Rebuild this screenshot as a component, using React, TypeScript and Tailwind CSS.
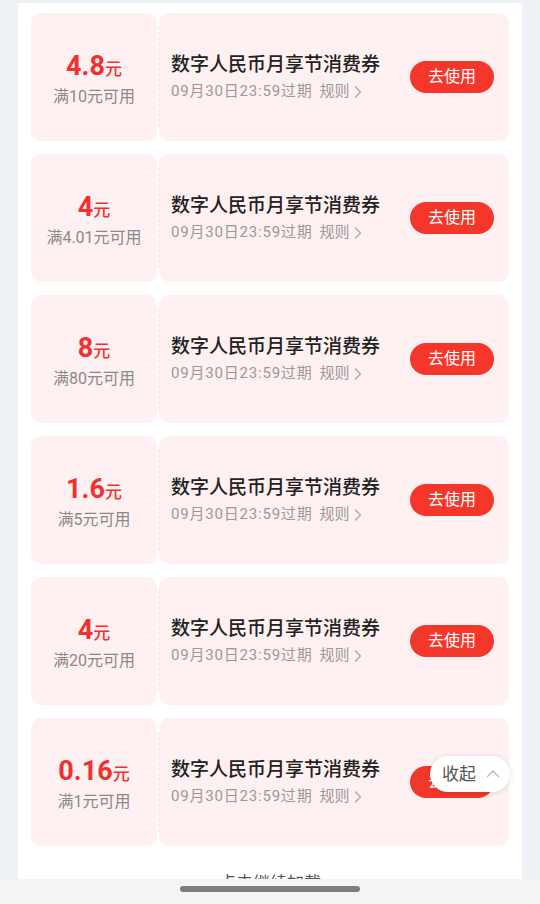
import React from "react";

type Coupon = {
  amount: string;
  limit: string;
};

const coupons: Coupon[] = [
  { amount: "4.8", limit: "满10元可用" },
  { amount: "4", limit: "满4.01元可用" },
  { amount: "8", limit: "满80元可用" },
  { amount: "1.6", limit: "满5元可用" },
  { amount: "4", limit: "满20元可用" },
  { amount: "0.16", limit: "满1元可用" },
];

const font = "font-['Roboto','Noto_Sans_CJK_SC',sans-serif]";

function CouponCard({ coupon }: { coupon: Coupon }) {
  return (
    <div className="flex h-[128px] mb-[13px]">
      <div className="w-[126px] rounded-[10px] bg-[#fff0f1] flex flex-col items-center justify-center pt-[4px]">
        <div className="flex items-baseline text-[#f2302f] leading-none">
          <span className="text-[27px] font-bold">{coupon.amount}</span>
          <span className="text-[17px] font-medium">元</span>
        </div>
        <div className="mt-[9px] text-[16px] text-[#8a8a8a] leading-none">
          {coupon.limit}
        </div>
      </div>
      <div className="w-[2px] flex justify-center py-[14px]">
        <div className="border-l border-dashed border-[#f6dde0] h-full" />
      </div>
      <div className="flex-1 rounded-[10px] bg-[#fff0f1] flex items-center pl-[12px] pr-[15px]">
        <div className="flex-1">
          <div className="text-[19px] font-medium text-[#222] leading-none">
            数字人民币月享节消费券
          </div>
          <div className="mt-[10px] flex items-center text-[15px] text-[#9a9a9a] leading-none">
            <span className="tracking-[0.8px]">09月30日23:59过期</span>
            <span className="ml-[7px]">规则</span>
            <svg width="10" height="14" viewBox="0 0 10 14" className="ml-[3px]">
              <path d="M2 1.5 L7.5 7 L2 12.5" fill="none" stroke="#aaa" strokeWidth="1.3" />
            </svg>
          </div>
        </div>
        <button className="w-[84px] h-[32px] rounded-full bg-[#f5372b] text-white text-[16px] leading-none">
          去使用
        </button>
      </div>
    </div>
  );
}

export default function App() {
  return (
    <div className={`${font} relative w-[540px] h-[904px] bg-[#eef1f6] overflow-hidden`}>
      <div className="h-[879px] overflow-hidden pt-[3px]">
        <div className="mx-[18px] bg-white px-[13px] pt-[10px] h-[900px]">
          {coupons.map((c, i) => (
            <CouponCard key={i} coupon={c} />
          ))}
          <div className="text-center text-[17px] text-[#555] pt-[12px]">点击继续加载</div>
        </div>
      </div>
      <div className="h-[25px] bg-[#f4f4f4] flex justify-center pt-[7px]">
        <div className="w-[180px] h-[6px] rounded-full bg-[#7d7d7d]" />
      </div>

      <div className="absolute left-[430px] top-[756px] w-[80px] h-[36px] rounded-full bg-white shadow-[0_1px_6px_rgba(0,0,0,0.12)] flex items-center pl-[12px]">
        <span className="text-[17px] text-[#555] leading-none">收起</span>
        <svg width="16" height="10" viewBox="0 0 16 10" className="ml-[9px]">
          <path d="M2 8 L8 2 L14 8" fill="none" stroke="#bbb" strokeWidth="1.4" />
        </svg>
      </div>
    </div>
  );
}
